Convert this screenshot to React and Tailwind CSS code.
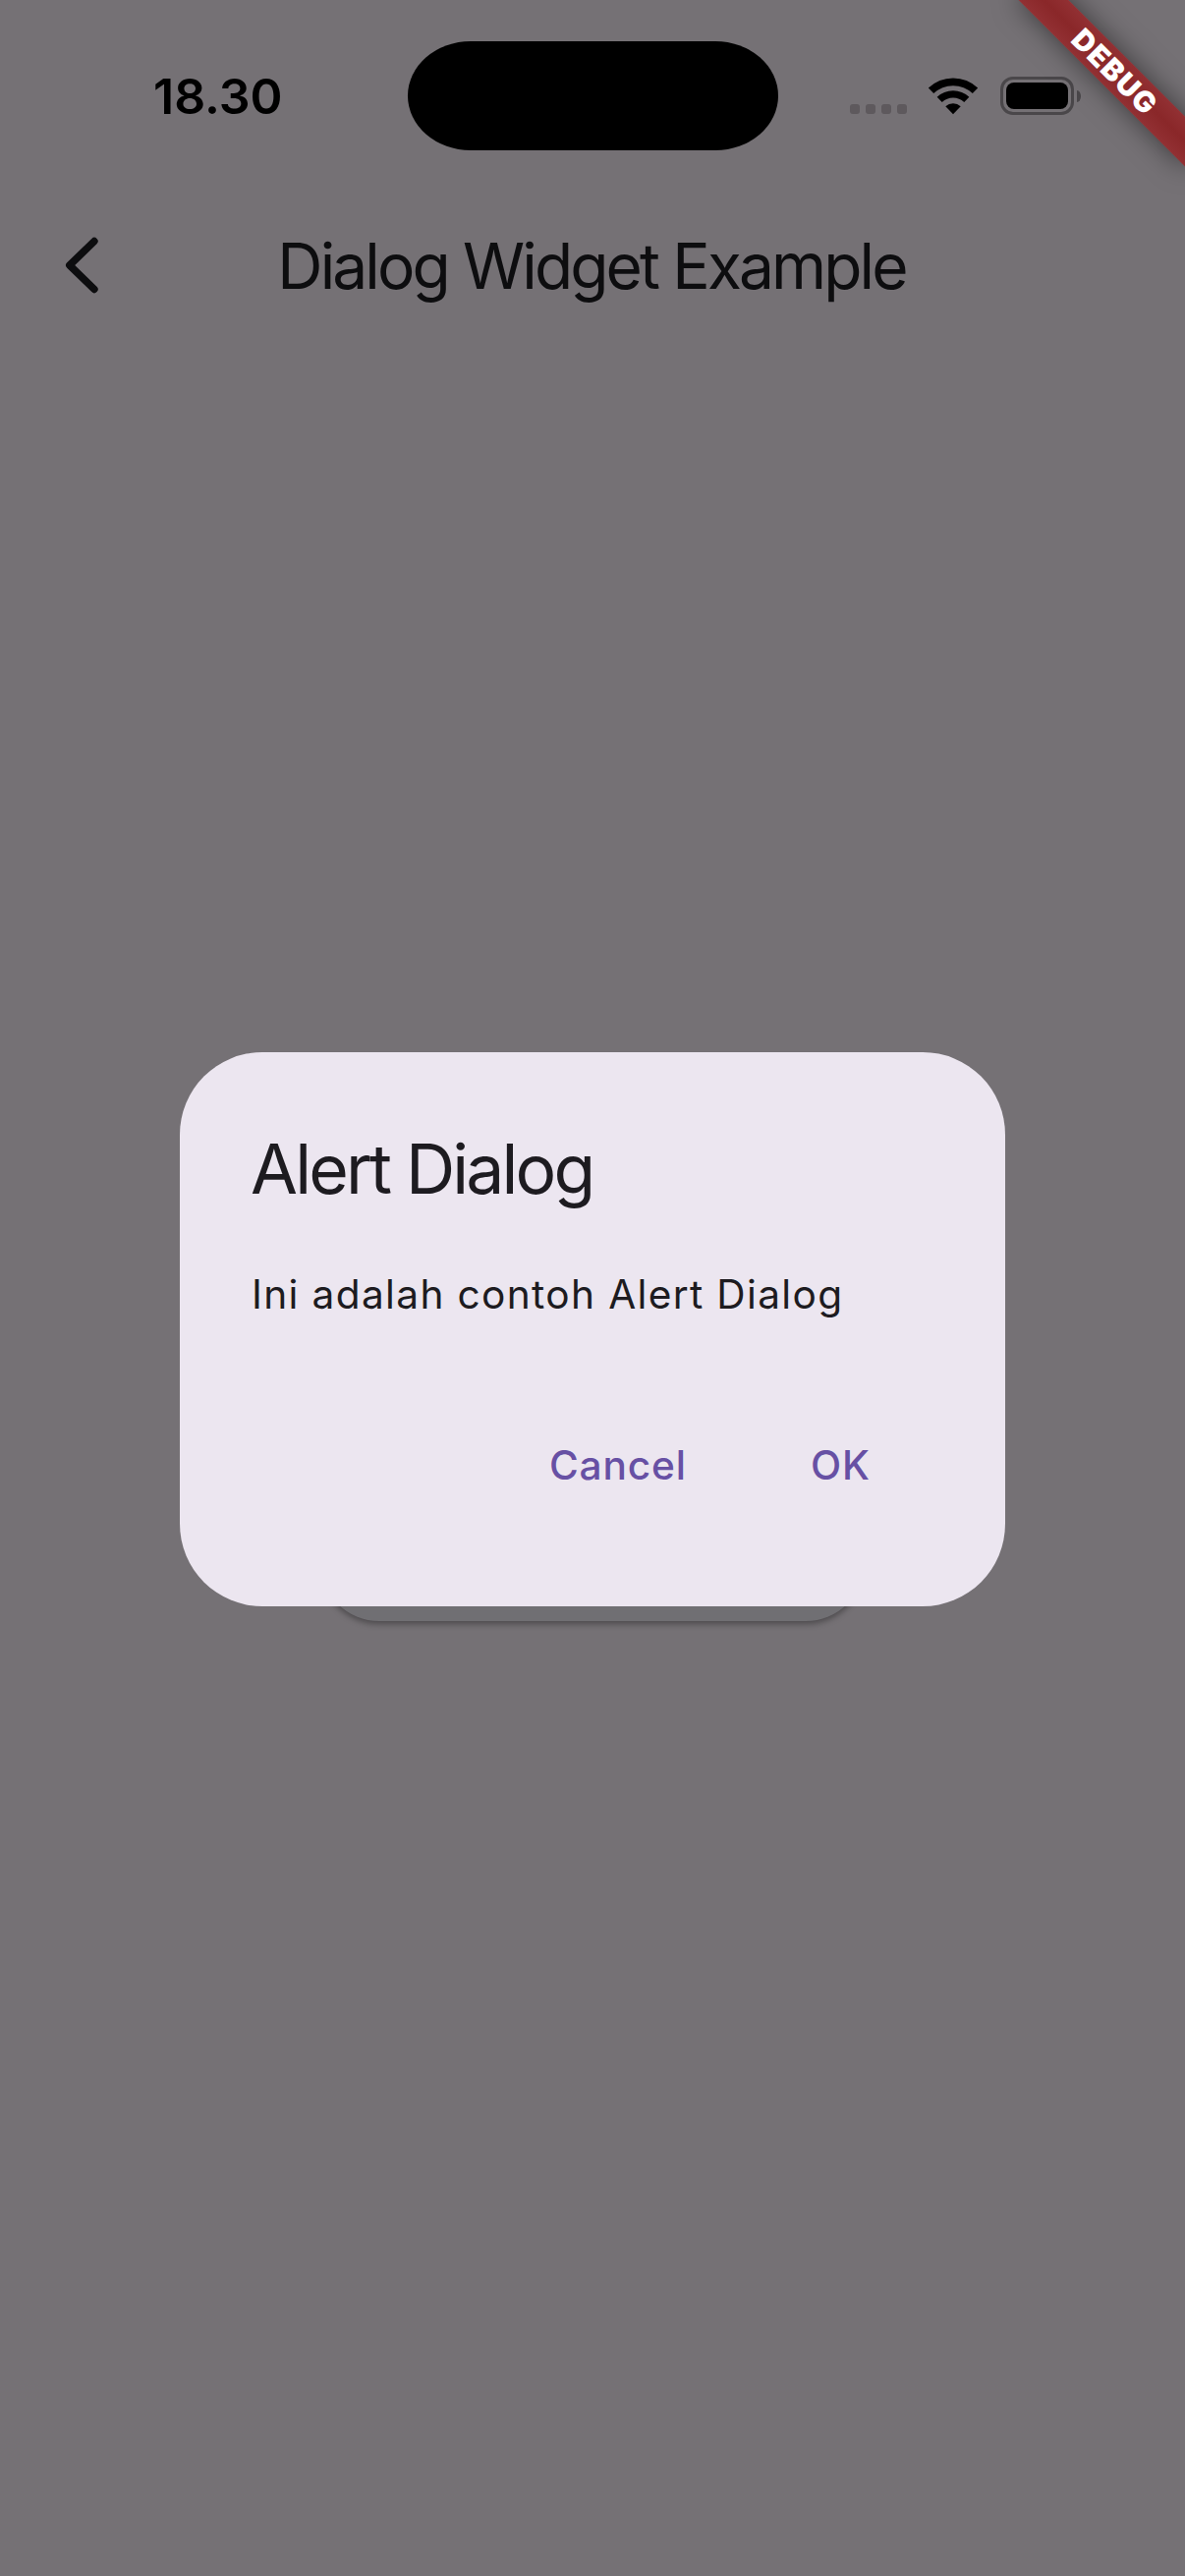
const inter = "font-['Inter','Liberation_Sans',sans-serif]";

function DynamicIsland() {
  return <div className="h-[111px] w-[377px] rounded-[64px/55.5px] bg-black" />;
}

function SignalDots() {
  return (
    <div className="flex gap-[6px] pt-[28px]">
      {[0, 1, 2, 3].map((i) => (
        <span key={i} className="size-[10px] rounded-[3px] bg-[#5e595d]" />
      ))}
    </div>
  );
}

function WifiIcon() {
  return (
    <svg className="h-[39px] w-[52px]" viewBox="0 0 52 39" fill="none" aria-hidden="true">
      <path d="M3.5 14.3a32.6 32.6 0 0 1 45 0" stroke="#000" strokeWidth="7.8" />
      <path d="M12.2 23.4a20 20 0 0 1 27.6 0" stroke="#000" strokeWidth="7.4" />
      <path d="M26 38.2l-7.7-7.9a11.4 11.4 0 0 1 15.4 0z" fill="#000" />
    </svg>
  );
}

function BatteryIcon() {
  return (
    <div className="flex items-center gap-[3px]">
      <div className="h-[39px] w-[75px] rounded-[13px] border-3 border-[#4a474a] p-[3px]">
        <div className="h-full w-full rounded-[8px] bg-black" />
      </div>
      <div className="h-[12px] w-[4px] rounded-r-[4px_6px] bg-[#4a474a]" />
    </div>
  );
}

function StatusBar() {
  return (
    <div className="flex h-[177px] items-start">
      <div className="w-[414.5px] pt-[68px] pl-[156px] text-[50px] leading-[61px] font-semibold text-black">
        <span>18.30</span>
      </div>
      <div className="pt-[41.5px]">
        <DynamicIsland />
      </div>
      <div className="mt-[78px] flex h-[39px] pl-[73.5px]">
        <SignalDots />
        <div className="ml-[21px]">
          <WifiIcon />
        </div>
        <div className="ml-[22px]">
          <BatteryIcon />
        </div>
      </div>
    </div>
  );
}

function AppBar() {
  return (
    <header className="flex h-[168px] items-center justify-between">
      <button aria-label="Back" className="flex w-[168px] pt-[18px] pl-[60px]">
        <svg className="h-[64px] w-[48px]" viewBox="0 0 48 64" fill="none" aria-hidden="true">
          <path d="M35.9 7.6L10.8 32L35.9 56.4" stroke="#0d0d0f" strokeWidth="7.5" strokeLinecap="round" strokeLinejoin="round" />
        </svg>
      </button>
      <h1 className="pt-[20px] pr-[2px] text-[64px] leading-[84px] font-normal tracking-[-2.86px] whitespace-nowrap text-[#0d0d0f]">Dialog Widget Example</h1>
      <div className="w-[168px]" />
    </header>
  );
}

function DebugBanner() {
  return (
    <div className="absolute top-0 right-0 size-[300px] overflow-hidden">
      <div className="absolute top-[54px] left-[108px] flex h-[36px] w-[240px] rotate-45 items-center justify-center bg-linear-to-b from-[#923033] via-[#8a2729] to-[#923033] shadow-[0_0_28px_rgba(0,0,0,0.5)]">
        <span className="text-[29.6px] leading-[36px] font-black tracking-[1.3px] text-white -mr-[2.5px]">DEBUG</span>
      </div>
    </div>
  );
}

function AlertDialog() {
  return (
    <div role="dialog" className="flex h-[564px] w-[840px] flex-col rounded-[84px] bg-[#ece6f0] px-[72px] pt-[71px] text-[#1d1b20]">
      <h2 className="text-[69.6px] leading-[96px] font-normal tracking-[-2.85px]">Alert Dialog</h2>
      <p className="mt-[50px] pl-[1px] text-[40.6px] leading-[60px] tracking-[1.36px]">Ini adalah contoh Alert Dialog</p>
      <div className="mt-[84px] flex justify-end gap-[126px] pr-[65px] text-[40.6px] leading-[120px] font-medium text-[#6750a4]">
        <button className="tracking-[0.9px]">Cancel</button>
        <button className="tracking-[1px]">OK</button>
      </div>
    </div>
  );
}

export default function App() {
  return (
    <div className={`${inter} relative h-[2622px] w-[1206px] overflow-hidden bg-[#757175]`}>
      <StatusBar />
      <AppBar />
      <main className="flex justify-center pt-[1185px]">
        <div className="h-[120px] w-[554px] rounded-full bg-[#706f73] shadow-[0_3px_6px_rgba(0,0,0,0.35)]" />
      </main>
      <div className="absolute inset-0 flex justify-center pt-[1071px]">
        <AlertDialog />
      </div>
      <DebugBanner />
    </div>
  );
}
